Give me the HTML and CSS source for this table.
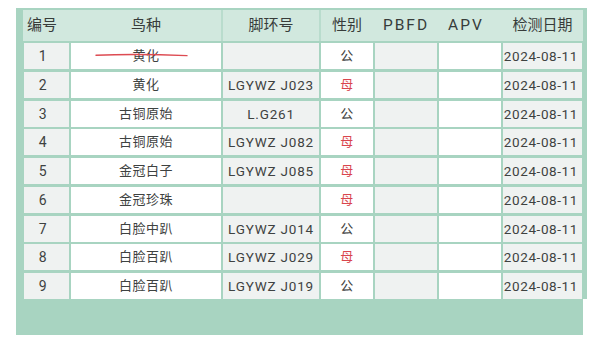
FILE: index.html
```html
<!DOCTYPE html>
<html lang="zh">
<head>
<meta charset="utf-8">
<link rel="stylesheet" href="styles.css">
</head>
<body>
<div class="sheet">
  <div class="frame">
    <div class="head">
      <div class="h c-no">编号</div>
      <div class="h">鸟种</div>
      <div class="h div-l">脚环号</div>
      <div class="h div-l">性别</div>
      <div class="h lat">PBFD</div>
      <div class="h lat apv">APV</div>
      <div class="h">检测日期</div>
    </div>
    <div class="rows">
      <div class="row">
        <div class="cell g num">1</div>
        <div class="cell w struck">黄化<svg class="strike" width="100" height="6" viewBox="0 0 100 6"><path d="M1 3.2 C 30 2.2, 60 2.4, 92 3.6" stroke="#dd4b52" stroke-width="1.4" fill="none" stroke-linecap="round"/></svg></div>
        <div class="cell g"></div>
        <div class="cell w">公</div>
        <div class="cell g"></div>
        <div class="cell w"></div>
        <div class="cell g date">2024-08-11</div>
      </div>
      <div class="row">
        <div class="cell g num">2</div>
        <div class="cell w">黄化</div>
        <div class="cell g ring">LGYWZ J023</div>
        <div class="cell w f">母</div>
        <div class="cell g"></div>
        <div class="cell w"></div>
        <div class="cell g date">2024-08-11</div>
      </div>
      <div class="row">
        <div class="cell g num">3</div>
        <div class="cell w">古铜原始</div>
        <div class="cell g ring">L.G261</div>
        <div class="cell w">公</div>
        <div class="cell g"></div>
        <div class="cell w"></div>
        <div class="cell g date">2024-08-11</div>
      </div>
      <div class="row">
        <div class="cell g num">4</div>
        <div class="cell w">古铜原始</div>
        <div class="cell g ring">LGYWZ J082</div>
        <div class="cell w f">母</div>
        <div class="cell g"></div>
        <div class="cell w"></div>
        <div class="cell g date">2024-08-11</div>
      </div>
      <div class="row">
        <div class="cell g num">5</div>
        <div class="cell w">金冠白子</div>
        <div class="cell g ring">LGYWZ J085</div>
        <div class="cell w f">母</div>
        <div class="cell g"></div>
        <div class="cell w"></div>
        <div class="cell g date">2024-08-11</div>
      </div>
      <div class="row">
        <div class="cell g num">6</div>
        <div class="cell w">金冠珍珠</div>
        <div class="cell g ring"></div>
        <div class="cell w f">母</div>
        <div class="cell g"></div>
        <div class="cell w"></div>
        <div class="cell g date">2024-08-11</div>
      </div>
      <div class="row">
        <div class="cell g num">7</div>
        <div class="cell w">白脸中趴</div>
        <div class="cell g ring">LGYWZ J014</div>
        <div class="cell w">公</div>
        <div class="cell g"></div>
        <div class="cell w"></div>
        <div class="cell g date">2024-08-11</div>
      </div>
      <div class="row">
        <div class="cell g num">8</div>
        <div class="cell w">白脸百趴</div>
        <div class="cell g ring">LGYWZ J029</div>
        <div class="cell w f">母</div>
        <div class="cell g"></div>
        <div class="cell w"></div>
        <div class="cell g date">2024-08-11</div>
      </div>
      <div class="row">
        <div class="cell g num">9</div>
        <div class="cell w">白脸百趴</div>
        <div class="cell g ring">LGYWZ J019</div>
        <div class="cell w">公</div>
        <div class="cell g"></div>
        <div class="cell w"></div>
        <div class="cell g date">2024-08-11</div>
      </div>
    </div>
  </div>
  <div class="foot"></div>
</div>
</body>
</html>
```
FILE: styles.css
```css
* { box-sizing: border-box; }
html, body { margin: 0; padding: 0; background: #ffffff; }
body {
  font-family: Roboto, "Noto Sans CJK SC", sans-serif;
  color: #3e4241;
  width: 600px;
  height: 342px;
  overflow: hidden;
}
.sheet {
  margin: 8px 0 0 16px;
  width: 571px;
}
.frame {
  background: #a8d4c1;
  padding: 2px 5px 0 8px;
}
.head, .row {
  display: grid;
  grid-template-columns: 45px 150px 96px 52px 62px 62px 79px;
  column-gap: 2px;
}
.head {
  background: #d1e8de;
  height: 31px;
  margin-left: -1px;
  padding-left: 1px;
  margin-right: -1px;
  padding-right: 1px;
}
.h {
  font-size: 15px;
  line-height: 31px;
  text-align: center;
  color: #373c3a;
  position: relative;
}
.h.lat { font-size: 15.5px; letter-spacing: 2px; }
.h.apv { padding-right: 8px; }
.h.c-no { text-align: left; padding-left: 3px; }
.h.div-l::before {
  content: "";
  position: absolute;
  left: -2px;
  top: 0;
  bottom: 0;
  width: 2px;
  background: #b9dccd;
}
.rows {
  display: flex;
  flex-direction: column;
  gap: 2.75px;
  padding-top: 2px;
}
.row { height: 26px; }
.cell {
  font-size: 13px;
  line-height: 26px;
  text-align: center;
  letter-spacing: 0.5px;
  white-space: nowrap;
  color: #3e4241;
}
.g { background: #eff2f1; }
.w { background: #ffffff; }
.num { padding-right: 7px; font-size: 14px; }
.ring { letter-spacing: 0.8px; font-size: 13.5px; }
.f { color: #d9464e; }
.date { text-align: right; padding-right: 4px; letter-spacing: 0.6px; font-size: 13.5px; }
.struck { position: relative; }
.strike {
  position: absolute;
  left: 24px;
  top: 9px;
}
.foot {
  background: #a8d4c1;
  height: 36px;
  width: 567px;
}
```
